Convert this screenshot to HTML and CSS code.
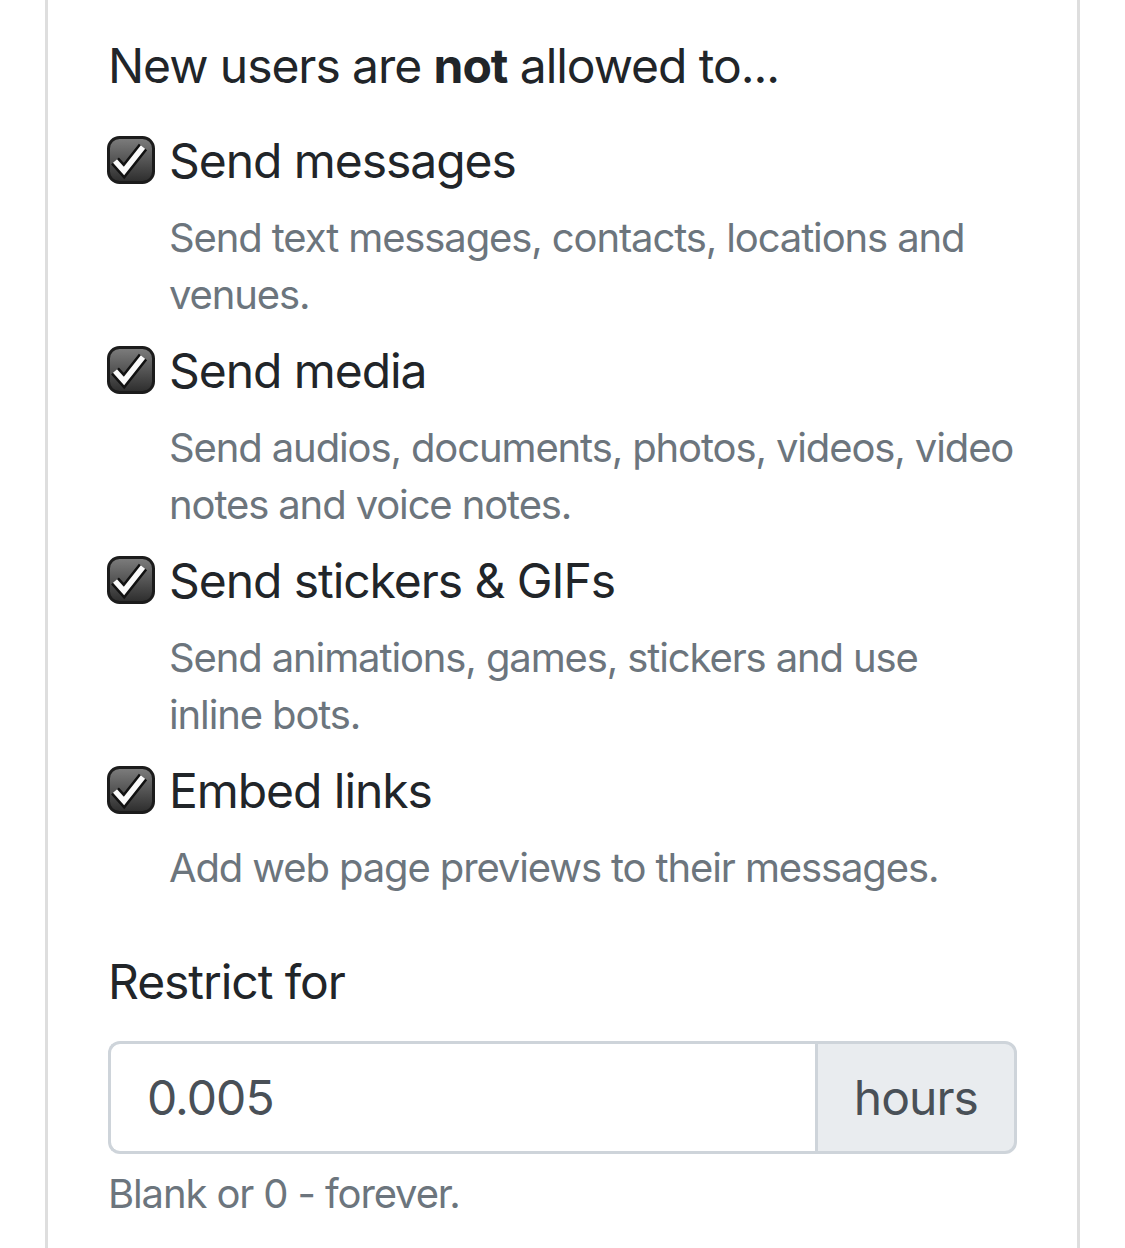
FILE: index.html
```html
<!DOCTYPE html>
<html lang="en">
<head>
<meta charset="utf-8">
<title>Restrictions</title>
<link rel="stylesheet" href="styles.css">
</head>
<body>
<div class="card">
  <p class="lead">New users are <b>not</b> allowed to...</p>

  <div class="perm">
    <div class="perm-head">
      <svg class="check" viewBox="0 0 48 48" width="48" height="48"><defs><linearGradient id="g1" x1="0" y1="0" x2="0" y2="1"><stop offset="0" stop-color="#7e7e7e"/><stop offset="1" stop-color="#2c2c2c"/></linearGradient></defs><rect x="1.5" y="1.5" width="45" height="45" rx="11" fill="url(#g1)" stroke="#1c1c1c" stroke-width="3"/><path d="M8 25 L17 35 L36 11" fill="none" stroke="#111" stroke-width="10.5" stroke-linejoin="miter"/><path d="M8 25 L17 35 L36 11" fill="none" stroke="#fafafa" stroke-width="5.5" stroke-linejoin="miter"/></svg>
      <span>Send messages</span>
    </div>
    <div class="perm-desc">Send text messages, contacts, locations and venues.</div>
  </div>

  <div class="perm">
    <div class="perm-head">
      <svg class="check" viewBox="0 0 48 48" width="48" height="48"><defs><linearGradient id="g2" x1="0" y1="0" x2="0" y2="1"><stop offset="0" stop-color="#7e7e7e"/><stop offset="1" stop-color="#2c2c2c"/></linearGradient></defs><rect x="1.5" y="1.5" width="45" height="45" rx="11" fill="url(#g2)" stroke="#1c1c1c" stroke-width="3"/><path d="M8 25 L17 35 L36 11" fill="none" stroke="#111" stroke-width="10.5" stroke-linejoin="miter"/><path d="M8 25 L17 35 L36 11" fill="none" stroke="#fafafa" stroke-width="5.5" stroke-linejoin="miter"/></svg>
      <span>Send media</span>
    </div>
    <div class="perm-desc">Send audios, documents, photos, videos, video notes and voice notes.</div>
  </div>

  <div class="perm">
    <div class="perm-head">
      <svg class="check" viewBox="0 0 48 48" width="48" height="48"><defs><linearGradient id="g3" x1="0" y1="0" x2="0" y2="1"><stop offset="0" stop-color="#7e7e7e"/><stop offset="1" stop-color="#2c2c2c"/></linearGradient></defs><rect x="1.5" y="1.5" width="45" height="45" rx="11" fill="url(#g3)" stroke="#1c1c1c" stroke-width="3"/><path d="M8 25 L17 35 L36 11" fill="none" stroke="#111" stroke-width="10.5" stroke-linejoin="miter"/><path d="M8 25 L17 35 L36 11" fill="none" stroke="#fafafa" stroke-width="5.5" stroke-linejoin="miter"/></svg>
      <span>Send stickers &amp; GIFs</span>
    </div>
    <div class="perm-desc">Send animations, games, stickers and use inline bots.</div>
  </div>

  <div class="perm">
    <div class="perm-head">
      <svg class="check" viewBox="0 0 48 48" width="48" height="48"><defs><linearGradient id="g4" x1="0" y1="0" x2="0" y2="1"><stop offset="0" stop-color="#7e7e7e"/><stop offset="1" stop-color="#2c2c2c"/></linearGradient></defs><rect x="1.5" y="1.5" width="45" height="45" rx="11" fill="url(#g4)" stroke="#1c1c1c" stroke-width="3"/><path d="M8 25 L17 35 L36 11" fill="none" stroke="#111" stroke-width="10.5" stroke-linejoin="miter"/><path d="M8 25 L17 35 L36 11" fill="none" stroke="#fafafa" stroke-width="5.5" stroke-linejoin="miter"/></svg>
      <span>Embed links</span>
    </div>
    <div class="perm-desc">Add web page previews to their messages.</div>
  </div>

  <div class="field">
    <label class="field-label" for="hours">Restrict for</label>
    <div class="input-group">
      <input id="hours" class="input" type="text" value="0.005">
      <span class="addon">hours</span>
    </div>
    <div class="hint">Blank or 0 - forever.</div>
  </div>
</div>
</body>
</html>
```

FILE: styles.css
```css
html, body {
  margin: 0;
  padding: 0;
  background: #fff;
}
body {
  font-family: Inter, "Noto Sans", sans-serif;
  color: #212529;
}
.card {
  margin-left: 45px;
  width: 1035px;
  box-sizing: border-box;
  min-height: 1248px;
  border-left: 3px solid #dedede;
  border-right: 3px solid #dedede;
  padding: 30px 60px 0 60px;
}
.lead {
  margin: 0 0 23px 0;
  font-size: 48px;
  line-height: 72px;
  letter-spacing: -0.022em;
}
.lead b {
  font-weight: 700;
}
.perm {
  margin-bottom: 12px;
}
.perm-head {
  display: flex;
  align-items: center;
  gap: 14px;
  height: 72px;
  font-size: 48px;
  line-height: 72px;
  letter-spacing: -0.022em;
}
.check {
  flex: none;
  margin-left: -1px;
  margin-top: -3px;
}
.perm-desc {
  margin: 12px 0 0 61px;
  font-size: 40px;
  line-height: 57px;
  letter-spacing: -0.028em;
  color: #6c757d;
}
.field {
  margin-top: 50px;
}
.field-label {
  display: block;
  font-size: 48px;
  line-height: 72px;
  letter-spacing: -0.022em;
  margin-bottom: 23px;
}
.input-group {
  display: flex;
  height: 113px;
}
.input {
  flex: 1;
  min-width: 0;
  box-sizing: border-box;
  height: 113px;
  margin: 0;
  border: 3px solid #ced4da;
  border-right: none;
  border-radius: 12px 0 0 12px;
  padding: 0 36px;
  font-family: inherit;
  letter-spacing: -0.02em;
  font-size: 48px;
  color: #495057;
  background: #fff;
  outline: none;
}
.addon {
  box-sizing: border-box;
  display: flex;
  align-items: center;
  height: 113px;
  padding: 0 36px;
  border: 3px solid #ced4da;
  border-radius: 0 12px 12px 0;
  background: #e9ecef;
  font-size: 48px;
  letter-spacing: -0.02em;
  color: #495057;
}
.hint {
  margin-top: 11px;
  font-size: 40px;
  line-height: 57px;
  letter-spacing: -0.028em;
  color: #6c757d;
}
```
